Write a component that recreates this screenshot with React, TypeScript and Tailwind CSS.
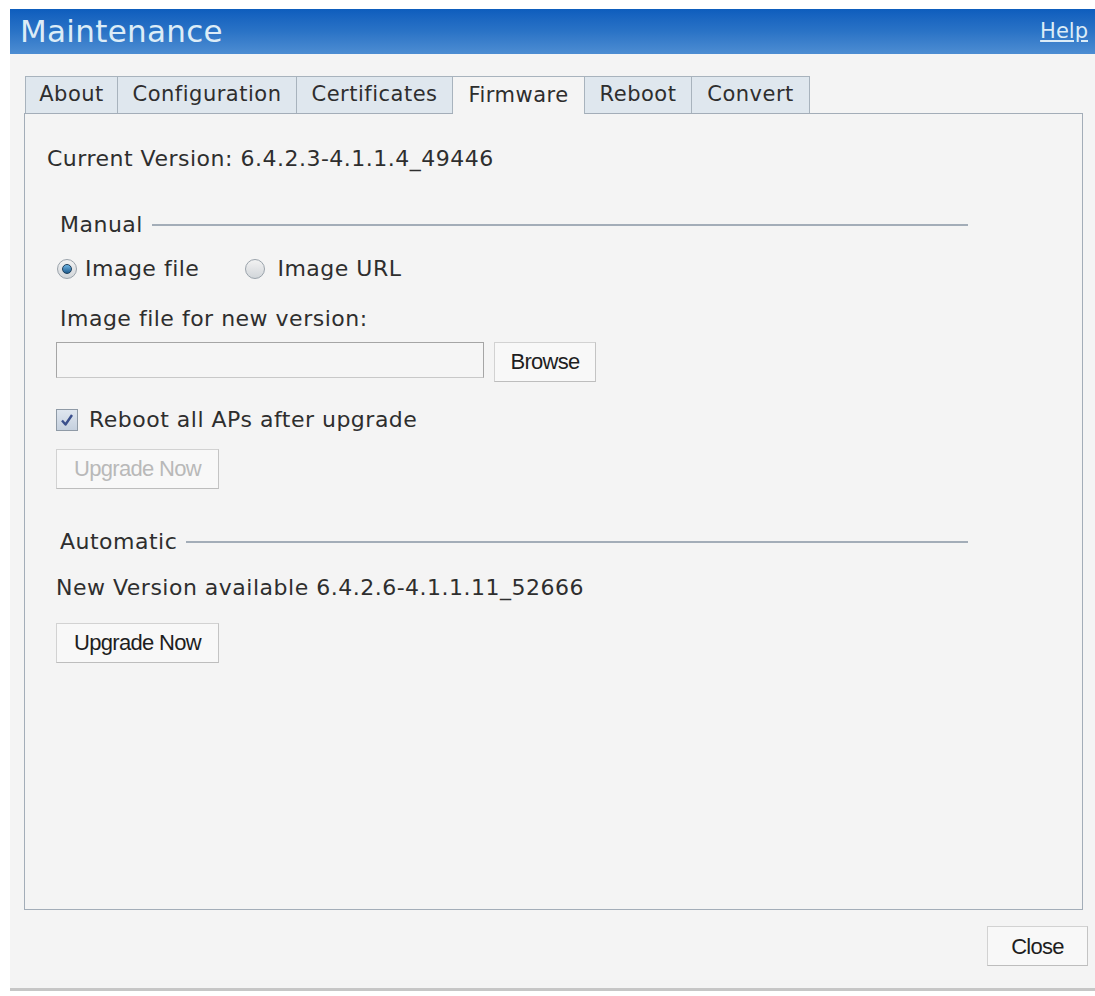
import React from 'react';

const body = '"DejaVu Sans", Verdana, sans-serif';
const btn = '"Liberation Sans", Arial, sans-serif';

const tabs = [
  { label: 'About', w: 'w-[93px]' },
  { label: 'Configuration', w: 'w-[179px]' },
  { label: 'Certificates', w: 'w-[156px]' },
  { label: 'Firmware', w: 'w-[132px]' },
  { label: 'Reboot', w: 'w-[107px]' },
  { label: 'Convert', w: 'w-[118px]' },
];

const Legend: React.FC<{ title: string }> = ({ title }) => (
  <div className="flex h-[26px] items-center">
    <span className="pl-[4px]">{title}</span>
    <div className="ml-[9px] h-[2px] flex-1 bg-[#a3adb8]" />
  </div>
);

const Radio: React.FC<{ checked?: boolean }> = ({ checked }) => (
  <span className="flex h-[20px] w-[20px] items-center justify-center rounded-full border border-[#9aa3ab] bg-gradient-to-b from-[#f2f2f2] to-[#d2d6da]">
    {checked && (
      <span className="h-[10px] w-[10px] rounded-full border border-[#1d3f5c] bg-gradient-to-b from-[#6fb6e4] to-[#1f5d8f]" />
    )}
  </span>
);

const Button: React.FC<{ label: string; w: string; disabled?: boolean }> = ({ label, w, disabled }) => (
  <button
    className={`flex h-[40px] ${w} items-center justify-center border border-[#d2d2d2] border-b-[#bdbdbd] border-r-[#c4c4c4] bg-[#f8f8f8] text-[22px] tracking-[-0.7px] ${
      disabled ? 'text-[#b9b9b9]' : 'text-[#1e1e1e]'
    }`}
    style={{ fontFamily: btn }}
  >
    {label}
  </button>
);

export default function App() {
  return (
    <div className="min-h-screen bg-white pl-[10px] pt-[9px]" style={{ fontFamily: body }}>
      {/* title bar */}
      <div className="flex h-[45px] items-center justify-between bg-gradient-to-b from-[#0d5dbd] via-[#2a73c6] to-[#4d8dd2] pl-[10px] pr-[7px]">
        <span className="text-[31px] leading-none tracking-[0.3px] text-[#dcecf7]">Maintenance</span>
        <a className="text-[21px] text-[#dcecf7] underline underline-offset-2">Help</a>
      </div>

      <div className="flex h-[937px] flex-col border-b-[3px] border-[#c6c6c6] bg-[#f4f4f4] pl-[14px] pr-[12px] pt-[22px]">
        {/* tab strip */}
        <div className="ml-[1px] flex h-[37px]">
          {tabs.map((t) => {
            const active = t.label === 'Firmware';
            return (
              <div
                key={t.label}
                className={`flex ${t.w} items-center justify-center border-t border-r border-[#a8b3bd] text-[21px] tracking-[0.5px] text-[#2e2e2e] ${
                  t.label === 'About' ? 'border-l' : ''
                } ${active ? 'relative z-10 -mb-px bg-[#f4f4f4]' : 'bg-[#dfe7ee]'}`}
              >
                {t.label}
              </div>
            );
          })}
        </div>

        {/* firmware panel */}
        <div className="flex h-[797px] flex-col border border-[#a3adb8] pl-[22px] pt-[32px] text-[22px] leading-[26px] tracking-[0.5px] text-[#2e2e2e]">
          <div>Current Version: 6.4.2.3-4.1.1.4_49446</div>

          <div className="ml-[9px] mt-[40px] w-[912px]">
            <Legend title="Manual" />
            <div className="mt-[18px] flex h-[26px] items-center">
              <span className="ml-[1px]"><Radio checked /></span>
              <span className="ml-[8px]">Image file</span>
              <span className="ml-[46px]"><Radio /></span>
              <span className="ml-[12px]">Image URL</span>
            </div>
            <div className="mt-[24px] pl-[4px]">Image file for new version:</div>
            <div className="mt-[10px] flex h-[40px] items-start">
              <div className="h-[36px] w-[428px] border border-[#a5a5a5] border-b-[#c8c8c8] bg-[#f5f5f5]" />
              <span className="ml-[10px]"><Button label="Browse" w="w-[102px]" /></span>
            </div>
            <div className="mt-[25px] flex h-[26px] items-center">
              <span className="flex h-[22px] w-[22px] items-center justify-center border border-[#8f9aa6] bg-gradient-to-b from-[#dfe6ef] to-[#c5d0de]">
                <svg viewBox="0 0 16 16" className="h-[16px] w-[16px]">
                  <path d="M3 8.5 L6.5 12.5 L13 3" fill="none" stroke="#3a4f8c" strokeWidth="2.4" strokeLinejoin="round" />
                </svg>
              </span>
              <span className="ml-[11px]">Reboot all APs after upgrade</span>
            </div>
            <div className="mt-[16px]">
              <Button label="Upgrade Now" w="w-[163px]" disabled />
            </div>
          </div>

          <div className="ml-[9px] mt-[40px] w-[912px]">
            <Legend title="Automatic" />
            <div className="mt-[20px]">New Version available 6.4.2.6-4.1.1.11_52666</div>
            <div className="mt-[22px]">
              <Button label="Upgrade Now" w="w-[163px]" />
            </div>
          </div>
        </div>

        <div className="-mr-[5px] mt-[16px] flex justify-end">
          <Button label="Close" w="w-[101px]" />
        </div>
      </div>
    </div>
  );
}
